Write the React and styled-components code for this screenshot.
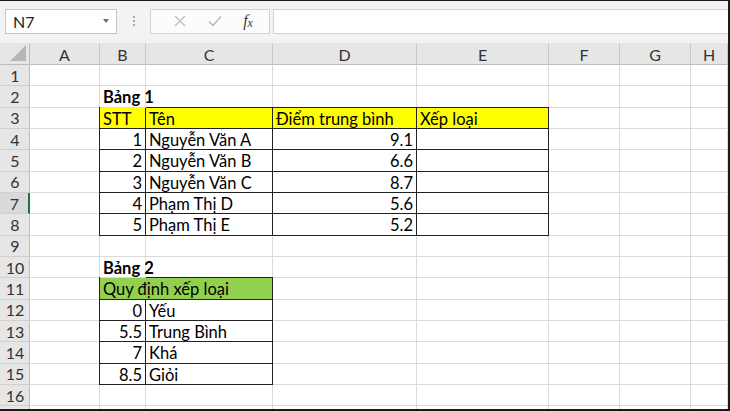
import React from 'react';
import styled, { createGlobalStyle } from 'styled-components';

const GlobalStyle = createGlobalStyle`
  html, body {
    margin: 0;
    padding: 0;
    background: #fff;
    overflow: hidden;
  }
  * { box-sizing: border-box; }
`;

const COLS = ['A', 'B', 'C', 'D', 'E', 'F', 'G', 'H'];
const ROW_H = 21.33;

const cells = {
  2: { B: { text: 'Bảng 1', bold: true } },
  3: {
    B: { text: 'STT', fill: '#ffff00', boxed: true },
    C: { text: 'Tên', fill: '#ffff00', boxed: true },
    D: { text: 'Điểm trung bình', fill: '#ffff00', boxed: true },
    E: { text: 'Xếp loại', fill: '#ffff00', boxed: true },
  },
  10: { B: { text: 'Bảng 2', bold: true } },
  11: { B: { text: 'Quy định xếp loại', fill: '#92d050', boxed: true, span: 2 } },
};

const students = [
  ['1', 'Nguyễn Văn A', '9.1'],
  ['2', 'Nguyễn Văn B', '6.6'],
  ['3', 'Nguyễn Văn C', '8.7'],
  ['4', 'Phạm Thị D', '5.6'],
  ['5', 'Phạm Thị E', '5.2'],
];
students.forEach(([stt, name, score], i) => {
  cells[4 + i] = {
    B: { text: stt, right: true, boxed: true },
    C: { text: name, boxed: true },
    D: { text: score, right: true, boxed: true },
    E: { text: '', boxed: true },
  };
});

const rules = [
  ['0', 'Yếu'],
  ['5.5', 'Trung Bình'],
  ['7', 'Khá'],
  ['8.5', 'Giỏi'],
];
rules.forEach(([min, label], i) => {
  cells[12 + i] = {
    B: { text: min, right: true, boxed: true },
    C: { text: label, boxed: true },
  };
});

const App = () => {
  const rows = Array.from({ length: 17 }, (_, i) => i + 1);
  return (
    <Window>
      <GlobalStyle />
      <FormulaBar>
        <NameBox>
          <span>N7</span>
          <Caret />
        </NameBox>
        <Grip>
          <i /><i /><i />
        </Grip>
        <FuncBox>
          <svg width="14" height="14" viewBox="0 0 14 14">
            <path d="M2 2 L12 12 M12 2 L2 12" stroke="#bdbdbd" strokeWidth="1.4" fill="none" />
          </svg>
          <svg width="16" height="14" viewBox="0 0 16 14">
            <path d="M2 7.5 L6 11.5 L14 2.5" stroke="#bdbdbd" strokeWidth="1.6" fill="none" />
          </svg>
          <Fx>
            f<sub>x</sub>
          </Fx>
        </FuncBox>
        <FormulaInput />
      </FormulaBar>

      <Sheet>
        <Corner>
          <svg width="16" height="16" viewBox="0 0 16 16">
            <path d="M16 0 L16 16 L0 16 Z" fill="#b7b7b7" />
          </svg>
        </Corner>
        {COLS.map((c) => (
          <ColHead key={c}>{c}</ColHead>
        ))}
        {rows.map((r) => {
          const rowCells = cells[r] || {};
          const out = [
            <RowHead key={`h${r}`} $active={r === 7}>
              {r}
            </RowHead>,
          ];
          let skip = 0;
          COLS.forEach((c) => {
            if (skip > 0) {
              skip -= 1;
              return;
            }
            const cell = rowCells[c];
            if (cell && cell.span) skip = cell.span - 1;
            out.push(
              <Cell
                key={`${c}${r}`}
                $fill={cell && cell.fill}
                $boxed={cell && cell.boxed}
                $bold={cell && cell.bold}
                $right={cell && cell.right}
                $span={cell && cell.span}
              >
                {cell ? cell.text : ''}
              </Cell>
            );
          });
          return out;
        })}
      </Sheet>
    </Window>
  );
};

export default App;

const Window = styled.div`
  width: 730px;
  height: 411px;
  border-top: 1px solid #1a1a1a;
  border-right: 2px solid #1a1a1a;
  border-bottom: 2px solid #1a1a1a;
  background: #fff;
  overflow: hidden;
  font-family: Lato, 'Noto Sans', sans-serif;
  color: #000;
`;

const FormulaBar = styled.div`
  height: 42px;
  background: #f3f3f3;
  display: flex;
  align-items: center;
  padding: 0 0 2px 5px;
`;

const NameBox = styled.div`
  width: 112px;
  height: 25px;
  background: #fff;
  border: 1px solid #c6c6c6;
  display: flex;
  align-items: center;
  justify-content: space-between;
  padding: 0 7px 0 7px;
  font-size: 16px;
  color: #222;
`;

const Caret = styled.span`
  width: 0;
  height: 0;
  border-left: 3.5px solid transparent;
  border-right: 3.5px solid transparent;
  border-top: 4px solid #6e6e6e;
`;

const Grip = styled.div`
  width: 33px;
  display: flex;
  flex-direction: column;
  align-items: center;
  gap: 2px;

  i {
    width: 2px;
    height: 2px;
    background: #a9a9a9;
  }
`;

const FuncBox = styled.div`
  width: 120px;
  height: 25px;
  background: #fcfcfc;
  border: 1px solid #d2d2d2;
  display: flex;
  align-items: center;
  justify-content: space-around;
  padding: 0 6px 0 12px;
`;

const Fx = styled.span`
  font-family: 'Liberation Serif', serif;
  font-style: italic;
  font-size: 16px;
  color: #3c3c3c;

  sub {
    font-size: 12px;
    vertical-align: -1px;
  }
`;

const FormulaInput = styled.div`
  flex: 1;
  height: 25px;
  margin-left: 3px;
  background: #fff;
  border: 1px solid #d2d2d2;
  border-right: none;
`;

const Sheet = styled.div`
  display: grid;
  grid-template-columns: 30px 70px 46px 127px 144px 132px 71px 71px 1fr;
  grid-template-rows: 22px;
  grid-auto-rows: ${ROW_H}px;
  background: #fff;
`;

const Corner = styled.div`
  background: #e6e6e6;
  border-right: 1px solid #bdbdbd;
  border-bottom: 1px solid #bdbdbd;
  display: flex;
  align-items: flex-end;
  justify-content: flex-end;
  padding: 0 3px 3px 0;
`;

const ColHead = styled.div`
  background: #e6e6e6;
  border-right: 1px solid #c8c8c8;
  border-bottom: 1px solid #bdbdbd;
  display: flex;
  align-items: center;
  justify-content: center;
  font-size: 16px;
  color: #333;
  padding-top: 1px;
`;

const RowHead = styled.div`
  background: ${(p) => (p.$active ? '#d9d9d9' : '#e6e6e6')};
  border-right: ${(p) => (p.$active ? '2px solid #217346' : '1px solid #bdbdbd')};
  border-bottom: 1px solid #d0d0d0;
  display: flex;
  align-items: center;
  justify-content: center;
  font-size: 16px;
  color: #333;
  padding-left: 1px;
`;

const Cell = styled.div`
  position: relative;
  z-index: ${(p) => (p.$bold ? 1 : 0)};
  grid-column: span ${(p) => p.$span || 1};
  background: ${(p) => p.$fill || 'transparent'};
  border-right: 1px solid #dadada;
  border-bottom: 1px solid #dadada;
  font-size: 16.5px;
  font-weight: ${(p) => (p.$bold ? 700 : 400)};
  text-align: ${(p) => (p.$right ? 'right' : 'left')};
  line-height: ${ROW_H - 1}px;
  padding: 1px 3px 0 3px;
  white-space: nowrap;
  overflow: visible;

  ${(p) =>
    p.$boxed &&
    `
    &::after {
      content: '';
      position: absolute;
      top: -1px;
      left: -1px;
      right: -1px;
      bottom: -1px;
      border: 1px solid #222;
      pointer-events: none;
    }
  `}
`;
